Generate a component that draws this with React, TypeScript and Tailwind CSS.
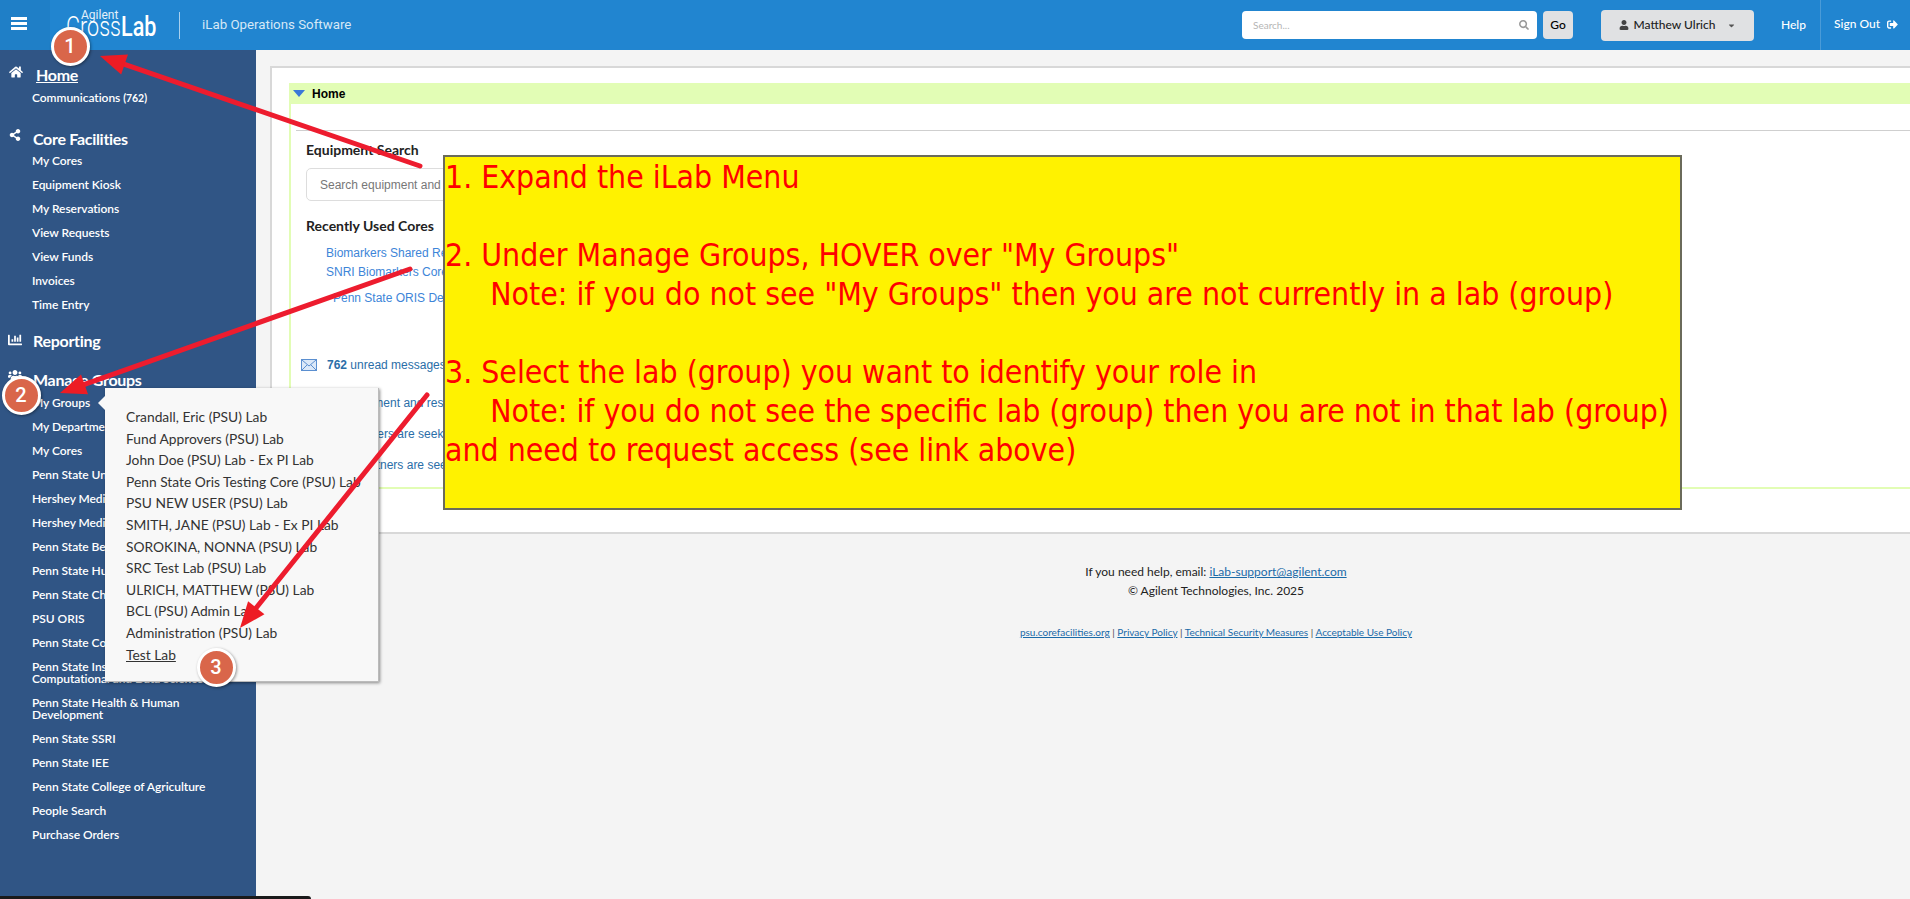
import { FaHome, FaShareAlt, FaUsers, FaUser, FaSearch, FaSignOutAlt, FaCaretDown, FaChartBar } from "react-icons/fa";

const lato = "font-['Lato',sans-serif]";
const arial = "font-['Liberation_Sans',Arial,sans-serif]";

function NavLink({ children }: { children: React.ReactNode }) {
    return (
        <li className="py-[6px] pl-[32px] pr-[40px] text-[12px] leading-[12px] font-semibold text-white tracking-[-0.05px]">
            {children}
        </li>
    );
}

function Header() {
    return (
        <header className="flex h-[50px] items-center bg-[#2185d0] text-white">
            <button className="flex h-[50px] w-[50px] flex-col gap-[2px] bg-[#1f7fc7] pl-[11px] pt-[17px]">
                <span className="h-[3px] w-[16px] bg-white" />
                <span className="h-[3px] w-[16px] bg-white" />
                <span className="h-[3px] w-[16px] bg-white" />
            </button>
            {/* Logo */}
            <div className="relative ml-[16px] h-[50px] w-[90px] shrink-0">
                <span className="absolute left-[15px] top-[8px] text-[12px] leading-[14px] font-['Roboto',sans-serif] text-[#e4f0fa]">Agilent</span>
                <span className="absolute left-0 top-[13px] origin-left scale-x-[0.77] text-[28px] leading-[28px] whitespace-nowrap font-['Roboto',sans-serif] font-light">Cross<b className="font-medium">Lab</b></span>
            </div>
            <div className="ml-[23px] h-[27px] w-px bg-[#a8d0ee]" />
            <span className="ml-[22px] font-['Roboto',sans-serif] text-[13.3px] text-[#d6e8f6]">iLab Operations Software</span>

            <div className={`ml-auto flex items-center ${lato}`}>
                <div className="flex h-[28px] w-[295px] items-center justify-between rounded-[4px] bg-white pl-[11px] pr-[8px]">
                    <span className="text-[10px] text-[#b5b5b5]">Search...</span>
                    <FaSearch size={10} className="text-[#9a9a9a]" />
                </div>
                <button className="ml-[6px] h-[28px] w-[30px] rounded-[4px] bg-[#e0e1e3] text-[12px] font-medium text-black">Go</button>
                <button className="ml-[28px] flex h-[31px] w-[153px] items-center justify-center rounded-[4px] bg-[#e0e1e3] text-[12px] font-medium text-[#222]">
                    <FaUser size={10} className="mr-[5px] text-[#444]" />
                    Matthew Ulrich
                    <FaCaretDown size={9} className="ml-[12px] text-[#555]" />
                </button>
                <span className="ml-[27px] -mt-px text-[12px] font-medium">Help</span>
                <div className="ml-[14px] flex h-[50px] w-[90px] items-center border-l border-[#4a9bd8] pl-[13px] pb-[2px] text-[12px] font-medium">
                    Sign Out
                    <FaSignOutAlt size={11} className="ml-[7px]" />
                </div>
            </div>
        </header>
    );
}

function Sidebar() {
    return (
        <aside className={`relative w-[256px] shrink-0 bg-[#305585] pt-[15px] text-white ${lato}`}>
            <section>
                <div className="relative pl-[36px] text-[16px] leading-[19px] font-bold tracking-[-0.3px] underline">
                    <FaHome size={14} className="absolute left-[9px] top-[0px]" />
                    Home
                </div>
                <ul className="mt-[2px]">
                    <NavLink>Communications <span className="text-[10.5px] font-bold">(762)</span></NavLink>
                </ul>
            </section>
            <section className="mt-[19px]">
                <div className="relative pl-[33px] text-[16px] leading-[19px] font-bold tracking-[-0.3px]">
                    <FaShareAlt size={12} className="absolute left-[9px] top-[0px]" />
                    Core Facilities
                </div>
                <ul className="mt-[1px]">
                    <NavLink>My Cores</NavLink>
                    <NavLink>Equipment Kiosk</NavLink>
                    <NavLink>My Reservations</NavLink>
                    <NavLink>View Requests</NavLink>
                    <NavLink>View Funds</NavLink>
                    <NavLink>Invoices</NavLink>
                    <NavLink>Time Entry</NavLink>
                </ul>
            </section>
            <section className="mt-[14px]">
                <div className="relative pl-[33px] text-[16px] leading-[19px] font-bold tracking-[-0.3px]">
                    <FaChartBar size={14} className="absolute left-[8px] top-[2px]" />
                    Reporting
                </div>
            </section>
            <section className="mt-[20px]">
                <div className="relative pl-[33px] text-[16px] leading-[19px] font-bold tracking-[-0.3px]">
                    <FaUsers size={14} className="absolute left-[8px] top-[-2px]" />
                    Manage Groups
                </div>
                <ul className="mt-[2px]">
                    <NavLink>My Groups</NavLink>
                    <NavLink>My Departments</NavLink>
                    <NavLink>My Cores</NavLink>
                    <NavLink>Penn State University</NavLink>
                    <NavLink>Hershey Medical Center</NavLink>
                    <NavLink>Hershey Medical School</NavLink>
                    <NavLink>Penn State Behrend</NavLink>
                    <NavLink>Penn State Huck</NavLink>
                    <NavLink>Penn State Chemistry</NavLink>
                    <NavLink>PSU ORIS</NavLink>
                    <NavLink>Penn State College</NavLink>
                    <NavLink>Penn State Institute for Computational and Data Sciences</NavLink>
                    <NavLink>Penn State Health &amp; Human Development</NavLink>
                    <NavLink>Penn State SSRI</NavLink>
                    <NavLink>Penn State IEE</NavLink>
                    <NavLink>Penn State College of Agriculture</NavLink>
                    <NavLink>People Search</NavLink>
                    <NavLink>Purchase Orders</NavLink>
                </ul>
            </section>
        </aside>
    );
}

function GroupsMenu() {
    const labs = [
        "Crandall, Eric (PSU) Lab",
        "Fund Approvers (PSU) Lab",
        "John Doe (PSU) Lab - Ex PI Lab",
        "Penn State Oris Testing Core (PSU) Lab",
        "PSU NEW USER (PSU) Lab",
        "SMITH, JANE (PSU) Lab - Ex PI Lab",
        "SOROKINA, NONNA (PSU) Lab",
        "SRC Test Lab (PSU) Lab",
        "ULRICH, MATTHEW (PSU) Lab",
        "BCL (PSU) Admin Lab",
        "Administration (PSU) Lab",
    ];
    return (
        <div className={`absolute left-[105px] top-[388px] z-10 h-[294px] w-[274px] border-r border-b border-[#bbb] bg-[#f8f8f8] pt-[18px] pl-[21px] text-[13.8px] leading-[21.6px] text-[#333] shadow-[1px_1px_3px_rgba(0,0,0,0.45)] ${lato}`}>
            <span className="absolute left-[-7px] top-[8px] h-0 w-0 border-y-[7px] border-r-[7px] border-y-transparent border-r-[#f8f8f8]" />
            {labs.map((lab) => (
                <div key={lab} className="whitespace-nowrap">{lab}</div>
            ))}
            <div className="underline">Test Lab</div>
        </div>
    );
}

function HomePanel() {
    return (
        <div className="ml-[14px] h-[466px] border-t-2 border-l-2 border-[#d8d8d8] bg-white pt-[15px] pl-[17px]">
            <div className="h-[406px] border-b-2 border-l-2 border-[#e2fdb5]">
                <div className={`-ml-[2px] flex h-[21px] items-center bg-[#e2fdb5] pl-[4px] text-[12px] font-bold text-black ${arial}`}>
                    <span className="mr-[7px] h-0 w-0 border-x-[6px] border-t-[7px] border-x-transparent border-t-[#3b78d8]" />
                    Home
                </div>
                <div className="ml-[5px] mt-[26px] border-t border-[#cfcfcf] pl-[10px] pt-[10px]">
                    <h3 className={`text-[14px] leading-[18px] font-bold text-[#222] ${lato}`}>Equipment Search</h3>
                    <div className={`mt-[9px] flex h-[33px] w-[400px] items-center rounded-[5px] border border-[#ddd] pl-[13px] text-[12px] text-[#777] ${arial}`}>
                        Search equipment and services
                    </div>
                    <h3 className={`mt-[16px] text-[14px] leading-[18px] font-bold text-[#222] ${lato}`}>Recently Used Cores</h3>
                    <ul className={`mt-[9px] pl-[20px] text-[12px] text-[#3d85d8] ${arial}`}>
                        <li className="leading-[19px]">Biomarkers Shared Resource</li>
                        <li className="leading-[19px]">SNRI Biomarkers Core</li>
                        <li className="ml-[7px] mt-[7px] leading-[19px]">Penn State ORIS Demo</li>
                    </ul>
                    <div className={`mt-[48px] flex items-center text-[12px] text-[#2a6ea8] ${arial}`}>
                        <svg width="16" height="12" viewBox="0 0 16 12" className="ml-[-5px] mr-[10px]">
                            <rect x="0.5" y="0.5" width="15" height="11" fill="#dbe8f8" stroke="#5b8fd0" />
                            <path d="M1 1l7 6 7-6M1 11l5-5M15 11l-5-5" fill="none" stroke="#5b8fd0" />
                        </svg>
                        <span><b>762</b> unread messages</span>
                    </div>
                    <ul className={`mt-[14px] pl-[20px] text-[12px] text-[#2a6ea8] ${arial}`}>
                        <li className="ml-[-10px] leading-[31px]">Find Equipment and resources</li>
                        <li className="leading-[31px]">Researchers are seeking</li>
                        <li className="leading-[31px]">Other partners are seeking</li>
                    </ul>
                </div>
            </div>
        </div>
    );
}

function Footer() {
    return (
        <footer className={`border-t-2 border-[#d8d8d8] pl-[266px] pt-[28px] text-center text-[12px] text-[#222] ${lato}`}>
            <p className="leading-[19px]">If you need help, email: <a className="text-[#1a6aa8] underline">iLab-support@agilent.com</a></p>
            <p className="leading-[20px]">© Agilent Technologies, Inc. 2025</p>
            <p className="mt-[25px] text-[10px] leading-[13px] text-[#1a6aa8]">
                <a className="underline">psu.corefacilities.org</a> <span className="text-[#444]">|</span> <a className="underline">Privacy Policy</a> <span className="text-[#444]">|</span> <a className="underline">Technical Security Measures</a> <span className="text-[#444]">|</span> <a className="underline">Acceptable Use Policy</a>
            </p>
        </footer>
    );
}

function InstructionNote() {
    return (
        <div className="absolute left-[443px] top-[155px] z-20 h-[355px] w-[1239px] border-2 border-[#6b6b5a] bg-[#fff200] pt-px text-[31.7px] leading-[39px] whitespace-pre text-[#ff0000] font-['DejaVu_Sans_Condensed','DejaVu_Sans',sans-serif]">
            {`1. Expand the iLab Menu

2. Under Manage Groups, HOVER over "My Groups"
     Note: if you do not see "My Groups" then you are not currently in a lab (group)

3. Select the lab (group) you want to identify your role in
     Note: if you do not see the specific lab (group) then you are not in that lab (group)
and need to request access (see link above)`}
        </div>
    );
}

function Marker({ n, x, y }: { n: number; x: number; y: number }) {
    return (
        <div
            className="absolute z-40 flex h-[39px] w-[39px] items-center justify-center rounded-full border-[3px] border-white bg-[#d9664a] font-['Roboto',sans-serif] text-[20px] font-medium text-white shadow-[1px_1px_3px_rgba(0,0,0,0.4)]"
            style={{ left: x - 19.5, top: y - 19.5 }}
        >
            {n}
        </div>
    );
}

function Arrow({ from, to }: { from: [number, number]; to: [number, number] }) {
    const a = Math.atan2(to[1] - from[1], to[0] - from[0]);
    const head = 26;
    const wing = 10.5;
    const bx = to[0] - Math.cos(a) * head;
    const by = to[1] - Math.sin(a) * head;
    const nx = -Math.sin(a) * wing;
    const ny = Math.cos(a) * wing;
    return (
        <g>
            <line x1={from[0]} y1={from[1]} x2={bx} y2={by} stroke="#ed1c2e" strokeWidth="5" strokeLinecap="round" />
            <polygon points={`${to[0]},${to[1]} ${bx + nx},${by + ny} ${bx - nx},${by - ny}`} fill="#ed1c24" />
        </g>
    );
}

export default function App() {
    return (
        <div className="relative h-[899px] w-[1910px] overflow-hidden bg-[#f4f4f4]">
            <Header />
            <div className="flex h-[849px]">
                <Sidebar />
                <main className="flex-1 pt-[16px]">
                    <HomePanel />
                    <Footer />
                </main>
            </div>
            <GroupsMenu />
            <InstructionNote />

            {/* Screenshot annotations */}
            <svg className="absolute left-0 top-0 z-30" width="1910" height="899">
                <Arrow from={[420, 166]} to={[100, 56]} />
                <Arrow from={[410, 269]} to={[60, 393]} />
                <Arrow from={[427, 395]} to={[240, 628]} />
            </svg>
            <Marker n={1} x={70} y={46} />
            <Marker n={2} x={21} y={395} />
            <Marker n={3} x={216} y={667} />

            <div className="absolute bottom-0 left-0 z-10 h-[3px] w-[311px] rounded-tr-[3px] bg-[#1a1a1a]" />
        </div>
    );
}
